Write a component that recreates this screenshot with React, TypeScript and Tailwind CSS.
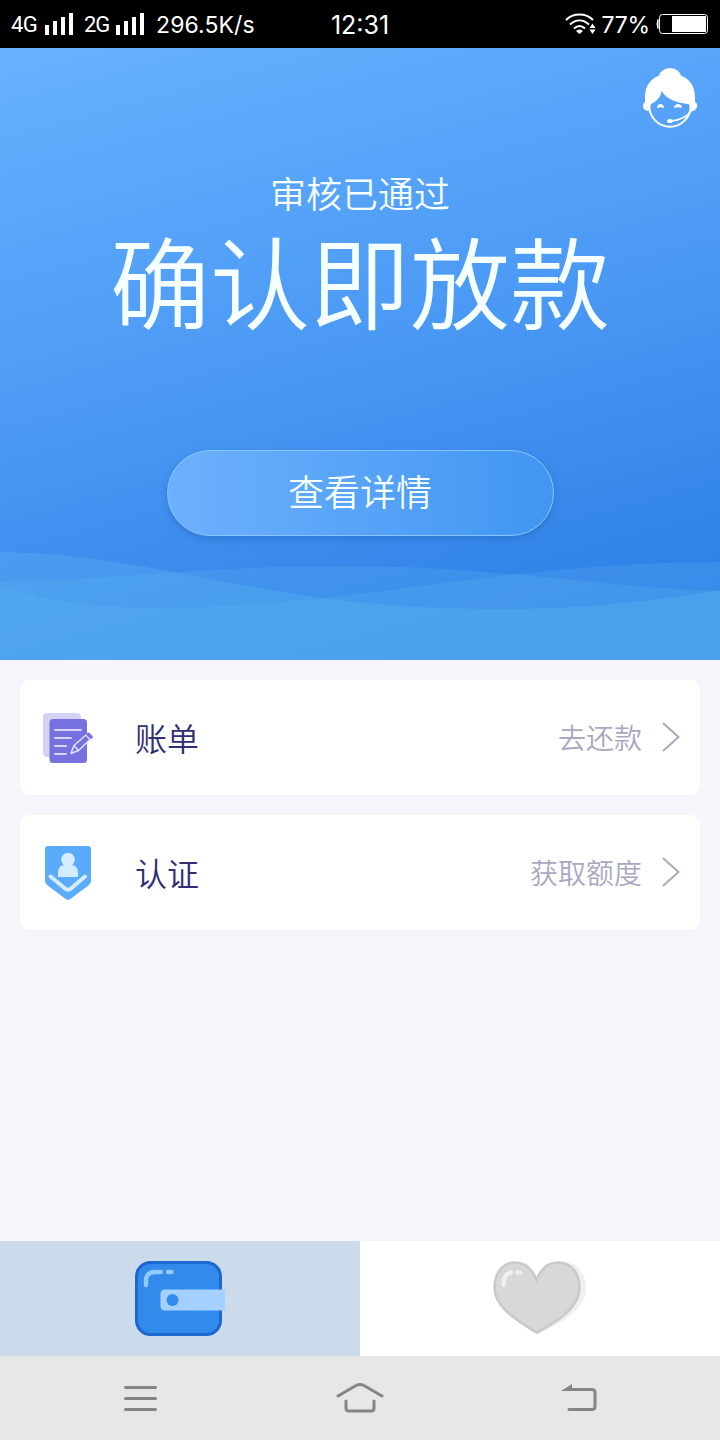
import React from "react";

const SignalBars = () => (
  <svg className="shrink-0" width="29" height="23" viewBox="0 0 29 23" fill="#fff">
    <rect x="0" y="12" width="4" height="10" />
    <rect x="8" y="8" width="4" height="14" />
    <rect x="16" y="4" width="4" height="18" />
    <rect x="24" y="0" width="4" height="22" />
  </svg>
);

const StatusBar = () => (
  <div className="grid h-12 grid-cols-[280px_160px_280px] items-center bg-black font-['Roboto','Liberation_Sans',sans-serif] font-normal text-white">
    <div className="flex items-center whitespace-nowrap pl-[11px]">
      <span className="w-[34px] shrink-0 pt-px text-[22px] tracking-[-0.7px]">4G</span>
      <SignalBars />
      <span className="ml-[10px] w-8 shrink-0 pt-px text-[22px] tracking-[-1px]">2G</span>
      <SignalBars />
      <span className="ml-[11px] pt-0.5 font-['Inter',sans-serif] text-[23px] tracking-[0.1px]">296.5K/s</span>
    </div>
    <div className="pt-1 text-center font-['Inter',sans-serif] text-[25px]">12:31</div>
    <div className="flex items-center justify-end pr-3 font-['Inter',sans-serif]">
      <svg width="31" height="22" viewBox="0 0 31 22" fill="none" stroke="#fff" strokeWidth="2">
        <path d="M1 7C8-.5 21-.5 28 7M5 11.500C11 6 18 6 24 11.500M9 15.500C13 12 16 12 20 15.500" />
        <path d="M11 18Q14.500 15 18 18L14.500 21Z" fill="#fff" stroke="none" />
        <path d="M24.500 15L27.500 10.500L30.500 15ZM24.500 16.500H30.500L27.500 21Z" fill="#fff" stroke="none" />
      </svg>
      <span className="ml-1.5 pt-0.5 text-[23px] tracking-[-0.2px]">77%</span>
      <svg className="ml-1.5" width="52" height="20" viewBox="0 0 52 20">
        <path d="M2 5.500Q0 10 2 14.500Z" fill="#fff" stroke="#fff" />
        <rect x="3.500" y=".5" width="48" height="19" rx="3" fill="none" stroke="#fff" />
        <rect x="16" y="2" width="34" height="16" fill="#fff" />
      </svg>
    </div>
  </div>
);

const SupportIcon = () => (
  <svg width="56" height="62" viewBox="0 0 56 62" fill="none">
    <ellipse cx="28" cy="10" rx="11" ry="9" fill="#fff" />
    <circle cx="28" cy="39" r="20.700" stroke="#fff" strokeWidth="2" />
    <path
      d="M3 35V30C3 17 11 10 20 7.500H36C45 10 53 17 53 30V35C56 36 56 41 53 43C51 45 49 44 48 42C48 39 48 38 46 37C36 36 25 33 19.500 24C19 30 14 35 9 37C8 39 8 41 8 43C5 45 2 43 1 40C1 38 1 36 3 35Z"
      fill="#fff"
    />
    <path d="M15 41C15 35.500 22 35.500 22 41Q18.500 39.500 15 41ZM32 41C32 35.500 40 35.500 40 41Q36 39.500 32 41Z" fill="#fff" />
    <path d="M50 43C46 49 40 53 29 54" stroke="#fff" strokeWidth="1.600" />
    <ellipse cx="28" cy="54" rx="3" ry="2" fill="#fff" />
  </svg>
);

const Waves = () => (
  <svg className="mt-auto block" width="720" height="108" viewBox="0 0 720 108" fill="#66bcf5">
    <path d="M0 0C170 3 260 57 496 57C590 57 660 48 720 38V108H0Z" fillOpacity=".28" />
    <path d="M0 29C110 29 200 14 340 14C500 14 590 35 720 39V108H0Z" fillOpacity=".2" />
    <path d="M0 35C50 50 100 56 160 56C350 56 500 10 720 10V108H0Z" fillOpacity=".2" />
  </svg>
);

const BillIcon = () => (
  <svg width="51" height="56" viewBox="0 0 51 56" fill="none">
    <rect x="0" y="3" width="38" height="44" rx="4" fill="#d5d1f3" />
    <rect x="6.500" y="9" width="37.500" height="44" rx="3.500" fill="#7770df" />
    <path d="M12 20H38M12 28H28M12 36H23M12 44H23" stroke="#d9d5f8" strokeWidth="2" strokeLinecap="round" />
    <path d="M28 43.500L31 35.500L43 25L47 29.500L35.500 40.500Z" fill="#7770df" stroke="#e2defc" strokeWidth="1.600" strokeLinejoin="round" />
    <path d="M31 35.500L35.500 40.500" stroke="#e2defc" strokeWidth="1.500" />
    <path d="M45.500 24.500L48 27" stroke="#7770df" strokeWidth="3.600" strokeLinecap="round" />
  </svg>
);

const VerifyIcon = () => (
  <svg width="46" height="56" viewBox="0 0 46 56">
    <path d="M0 4Q0 1 3 1H43Q46 1 46 4V36Q46 38 44 40L26 53.500Q23 56 20 53.500L2 40Q0 38 0 36Z" fill="#5aabfc" />
    <circle cx="23" cy="14.500" r="6.800" fill="#d4ecff" />
    <path d="M13 32V28Q13 20 20 20H26Q33 20 33 28V32Z" fill="#d4ecff" />
    <path d="M5.500 31.500L20 43.500Q23 46 26 43.500L40 31.500" fill="none" stroke="#d4ecff" strokeWidth="4" strokeLinecap="round" />
  </svg>
);

const WalletIcon = () => (
  <svg width="90" height="76" viewBox="0 0 90 76" fill="none">
    <rect x="1.500" y="1.500" width="84" height="72" rx="14" fill="#328aea" stroke="#1b68d0" strokeWidth="3" />
    <path d="M11 24V20Q11 11 20 11H26M33 11H36.500" stroke="#8fcbff" strokeWidth="4.400" strokeLinecap="round" />
    <path d="M30 28.500H90V49.500H30Q25.500 49.500 25.500 45V33Q25.500 28.500 30 28.500Z" fill="#a4d0ff" />
    <circle cx="37.500" cy="39" r="6" fill="#328aea" />
  </svg>
);

const HeartIcon = () => (
  <svg width="94" height="76" viewBox="0 0 94 76" fill="none">
    <path d="M49 18C53 7 60 1 69 1C83 1 93 11 93 27C93 50 66 63 44 74Z" fill="#f0f0f0" />
    <path
      d="M43.500 71.500C31 63 1.500 49 1.500 26.500C1.500 11 11 1.500 22 1.500C32 1.500 39 7 43.500 19C48 7 55 1.500 65 1.500C77 1.500 86.500 11 86.500 26.500C86.500 49 58 64 43.500 71.500Z"
      fill="#d8d8d8"
      stroke="#cacaca"
      strokeWidth="2.600"
    />
    <path d="M10.500 24Q10.500 13 18 11.500M24.500 11.500H27" stroke="#f0f0f0" strokeWidth="4.400" strokeLinecap="round" />
  </svg>
);

const rows = [
  { title: "账单", action: "去还款", icon: <BillIcon /> },
  { title: "认证", action: "获取额度", icon: <VerifyIcon /> },
];

const App = () => {
  return (
    <div className="flex h-[1440px] w-[720px] flex-col bg-[#f4f6fb] font-['Noto_Sans_CJK_SC',sans-serif] font-[350]">
      <StatusBar />

      {/* Hero */}
      <section className="flex h-[612px] flex-col items-center bg-[linear-gradient(165deg,#68b1ff_0%,#4998f4_50%,#2f80e6_90%)] text-[#f5ffff]">
        <button className="mr-[22px] mt-[19px] self-end">
          <SupportIcon />
        </button>
        <p className="mt-9 text-[36px] leading-[54px]">审核已通过</p>
        <h1 className="mt-[5px] text-[100px] leading-[110px] font-[350]">确认即放款</h1>
        <button className="mt-[116px] h-[86px] w-[387px] shrink-0 rounded-full border border-[#88c4ff] bg-linear-to-r from-[#6db0fd] to-[#4096f2] pb-[7px] text-[36px] shadow-[0_3px_6px_#2467bb88]">
          查看详情
        </button>
        <Waves />
      </section>

      {/* Menu */}
      <main className="flex flex-1 flex-col gap-5 p-5">
        {rows.map((row) => (
          <div key={row.title} className="flex h-[115px] items-center rounded-[10px] bg-white pl-[23px] pr-5">
            <div className="flex w-[92px]">
              <div className={row.title === "认证" ? "ml-0.5" : ""}>{row.icon}</div>
            </div>
            <span className="pb-0.5 text-[32px] text-[#302e75]">{row.title}</span>
            <span className="ml-auto pb-px text-[28px] text-[#a9a8c0]">{row.action}</span>
            <svg className="mb-px ml-5" width="18" height="30" viewBox="0 0 18 30" fill="none" stroke="#a9a8c0" strokeWidth="2">
              <path d="M1 1L16.500 15L1 29" />
            </svg>
          </div>
        ))}
      </main>

      {/* Tabs */}
      <div className="grid h-[115px] grid-cols-2">
        <button className="flex items-center justify-center bg-[#ccdbeb]">
          <WalletIcon />
        </button>
        <button className="flex items-center justify-center bg-white">
          <HeartIcon />
        </button>
      </div>

      {/* System navigation */}
      <div className="flex h-[84px] items-center justify-between bg-[#e7e7e7] pl-[123px] pr-[123px]">
        <svg width="35" height="30" viewBox="0 0 35 30" stroke="#858585" strokeWidth="3" strokeLinecap="round">
          <path d="M2.500 4.500H32.500M2.500 15.500H32.500M2.500 26.500H32.500" />
        </svg>
        <svg width="48" height="32" viewBox="0 0 48 32" fill="none" stroke="#858585" strokeWidth="3" strokeLinecap="round">
          <path d="M2 14L20 3.500Q24 1.500 28 3.500L46 14M10 19V26Q10 29 13 29H35Q38 29 38 26V19" />
        </svg>
        <svg width="36" height="30" viewBox="0 0 36 30" fill="none">
          <path d="M6 6.500H31Q34 6.500 34 9.500V23.500Q34 26.500 31 26.500H8" stroke="#858585" strokeWidth="3" strokeLinecap="round" />
          <path d="M0 8L11 1V8Z" fill="#858585" />
        </svg>
      </div>
    </div>
  );
};

export default App;
